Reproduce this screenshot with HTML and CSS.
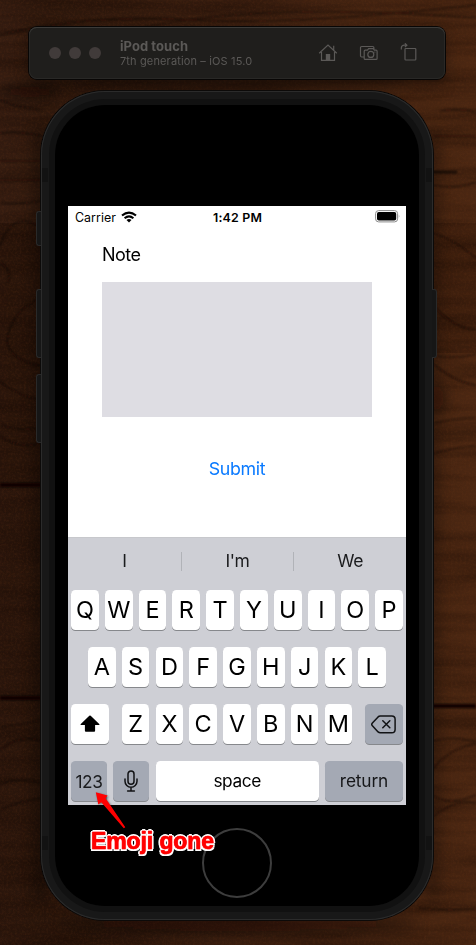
FILE: index.html
```html
<!DOCTYPE html>
<html lang="en">
<head>
<meta charset="utf-8">
<title>iPod touch Simulator</title>
<link rel="stylesheet" href="styles.css">
</head>
<body>
<svg class="wood" viewBox="0 0 476 945" aria-hidden="true">
  <defs>
    <linearGradient id="base" x1="0" x2="1" y1="0" y2="0">
      <stop offset="0" stop-color="#361d11"/><stop offset=".1" stop-color="#2f190d"/>
      <stop offset=".5" stop-color="#3b1f10"/><stop offset=".92" stop-color="#472511"/><stop offset="1" stop-color="#4b2712"/>
    </linearGradient>
    <filter id="grain" x="0" y="0" width="100%" height="100%" color-interpolation-filters="sRGB">
      <feTurbulence type="fractalNoise" baseFrequency=".007 .07" numOctaves="4" seed="8"/>
      <feColorMatrix values="0 0 0 0 .08  0 0 0 0 .03  0 0 0 0 .01  2.2 0 0 0 -.78"/>
    </filter>
    <filter id="speck" x="0" y="0" width="100%" height="100%" color-interpolation-filters="sRGB">
      <feTurbulence type="fractalNoise" baseFrequency=".45" numOctaves="2" seed="3"/>
      <feColorMatrix values="0 0 0 0 .45  0 0 0 0 .23  0 0 0 0 .1  .8 0 0 0 -.32"/>
    </filter>
    <filter id="soft" filterUnits="userSpaceOnUse" x="0" y="0" width="476" height="945"><feGaussianBlur stdDeviation=".8"/></filter>
    <filter id="haze" x="-50%" y="-50%" width="200%" height="200%"><feGaussianBlur stdDeviation="7"/></filter>
    <linearGradient id="fade"><stop offset="0" stop-color="#120600" stop-opacity=".3"/><stop offset="1" stop-color="#120600" stop-opacity="0"/></linearGradient>
  </defs>
  <rect width="476" height="945" fill="url(#base)"/>
  <rect y="223" width="240" height="262" fill="#120600" opacity=".32"/>
  <rect x="240" y="223" width="236" height="130" fill="#120600" opacity=".2"/>
  <rect y="485" width="300" height="460" fill="url(#fade)"/>
  <rect width="476" height="945" filter="url(#grain)" opacity=".35"/>
  <rect width="476" height="945" filter="url(#speck)" opacity=".5"/>
  <g filter="url(#haze)" fill="#0b0401" opacity=".55">
    <ellipse cx="30" cy="92" rx="30" ry="6"/><ellipse cx="438" cy="398" rx="6" ry="12"/>
    <ellipse cx="240" cy="84" rx="170" ry="4"/><ellipse cx="240" cy="924" rx="180" ry="7"/>
    <rect x="36" y="130" width="8" height="770"/><rect x="430" y="130" width="6" height="770"/>
  </g>
  <g filter="url(#soft)" fill="none" stroke="#100501" stroke-width="1.2" opacity=".65">
    <path d="M0 35Q90 14 190 20T476 5M145 27Q270 2 476 18M0 100Q20 108 42 110M0 133Q20 131 42 136M0 161H42M0 180H42M0 203Q20 205 42 201M440 111Q460 108 476 112M434 136H476M432 185Q455 190 476 182"/>
    <path d="M0 246Q13 208 42 228M0 262Q14 272 7 283M42 298Q10 310 7 343Q14 363 42 366M0 382Q20 397 42 400M0 425Q20 431 42 428M0 436Q20 450 42 443"/>
    <path d="M432 233Q452 238 476 258M432 304Q452 328 476 330M432 355Q455 360 476 354M432 363Q456 383 476 385M435 423Q456 418 476 418M432 454Q456 447 476 446"/>
    <path d="M0 727Q18 725 42 720M0 750Q22 733 42 741M0 783Q20 777 42 783M0 810Q20 801 42 798M432 741Q453 735 476 742M432 769Q452 747 476 744M432 795Q450 807 476 795M432 817Q456 799 476 803M418 908Q443 911 476 909"/>
  </g>
  <g filter="url(#soft)" fill="none" stroke="#080301" stroke-width="4">
    <path d="M0 485H42M0 698H42M432 706H476"/><path d="M432 172H457" stroke-width="2.5" opacity=".7"/>
  </g>
</svg>

<header class="toolbar">
  <div class="lights"><i></i><i></i><i></i></div>
  <div class="title"><strong>iPod touch</strong><span>7th generation – iOS 15.0</span></div>
  <div class="tools">
    <svg width="20" height="20" viewBox="0 0 20 20"><path d="M1.2 10.3 10 2l8.8 8.3M3.5 9v8.4h13V9M15.7 7V2.8"/><path class="solid" d="M7.8 11h4.4v6.5H7.8z"/></svg>
    <svg width="20" height="20" viewBox="0 0 20 20"><path d="M4.8 14H2.7Q1.5 14 1.5 12.8V4.7Q1.5 3.5 2.7 3.5h11q1.2 0 1.2 1.2v1.2M6.2 7.2h2.2l1.3-1.6h4.5l1.2 1.6h1.7q1 0 1 1v7.2q0 1-1 1H6.2q-1 0-1-1V8.2q0-1 1-1z"/><circle cx="11.8" cy="11.4" r="3"/><path d="M15.5 9.2h.8"/></svg>
    <svg width="20" height="20" viewBox="0 0 20 20"><rect x="5" y="5.5" width="10.8" height="11.5" rx=".8"/><path d="M1.3 6.5V5q0-2.8 3.2-2.8h2.2M4.9.3l2 1.9-2 1.9"/></svg>
  </div>
</header>

<main class="phone">
  <i class="side mute"></i><i class="side up"></i><i class="side down"></i><i class="side power"></i>
  <i class="band tl"></i><i class="band tr"></i><i class="band bl"></i><i class="band br"></i>
  <div class="face">
    <div class="screen">
      <div class="status">
        <div class="carrier">Carrier
          <svg width="16" height="12" viewBox="0 0 16 12"><g fill="none" stroke="#000" stroke-width="2.1"><path d="M1 4.5Q8-1.4 15 4.5M3.6 7.2Q8 3.5 12.4 7.2"/></g><path d="M5.5 8.9Q8 6.9 10.5 8.9L8 11.6z"/></svg>
        </div>
        <b>1:42 PM</b>
        <svg class="battery" width="25" height="13" viewBox="0 0 25 13"><rect x=".6" y=".6" width="22" height="11.3" rx="3" fill="none" stroke="#8b8b8b"/><rect x="2" y="2" width="19.2" height="8.5" rx="1.8"/><path d="M23.8 4.4Q25 6.2 23.8 8z" fill="#8b8b8b"/></svg>
      </div>
      <div class="form">
        <label for="note">Note</label>
        <textarea id="note"></textarea>
        <button>Submit</button>
      </div>
      <div class="keyboard">
        <div class="suggest"><span>I</span><span>I'm</span><span>We</span></div>
        <div class="row"><kbd>Q</kbd><kbd>W</kbd><kbd>E</kbd><kbd>R</kbd><kbd>T</kbd><kbd>Y</kbd><kbd>U</kbd><kbd>I</kbd><kbd>O</kbd><kbd>P</kbd></div>
        <div class="row"><kbd>A</kbd><kbd>S</kbd><kbd>D</kbd><kbd>F</kbd><kbd>G</kbd><kbd>H</kbd><kbd>J</kbd><kbd>K</kbd><kbd>L</kbd></div>
        <div class="row">
          <kbd class="shift"><svg width="20" height="18" viewBox="0 0 20 18"><path d="M9.3.8Q10 .2 10.7.8L19.2 9q.9.9-.4.9h-3.7v5.8q0 1-1 1H5.9q-1 0-1-1V9.9H1.2Q-.1 9.9.8 9z"/></svg></kbd>
          <kbd>Z</kbd><kbd>X</kbd><kbd>C</kbd><kbd>V</kbd><kbd>B</kbd><kbd>N</kbd><kbd>M</kbd>
          <kbd class="grey delete"><svg width="25" height="19" viewBox="0 0 25 19"><path class="line" d="M9.3 1h11.5q3.3 0 3.3 3.3v10.2q0 3.3-3.3 3.3H9.3q-1.3 0-2.2-.9L1.4 10.8q-1.3-1.4 0-2.8L7.1 1.9Q8 1 9.3 1zM11.8 5.8l7 7m0-7-7 7"/></svg></kbd>
        </div>
        <div class="row words">
          <kbd class="grey num">123</kbd>
          <kbd class="grey mic"><svg width="14" height="22" viewBox="0 0 14 22"><path class="line" d="M7 1a3 3 0 0 1 3 3v7.2a3 3 0 0 1-6 0V4a3 3 0 0 1 3-3zM1 9v2.2a6 6 0 0 0 12 0V9M7 17.3V21M3.6 21h6.8"/></svg></kbd>
          <kbd class="space">space</kbd>
          <kbd class="grey return">return</kbd>
        </div>
      </div>
    </div>
    <div class="home"></div>
  </div>
</main>

<div class="note-callout">
  <svg width="34" height="42" viewBox="0 0 34 42"><path d="M.8 1.2 12.6 4.6 10.6 7.2 30.3 36.3 28.8 37.3 6.3 11.2 3.3 13.4z"/></svg>
  <span>Emoji gone</span>
</div>
</body>
</html>
```
FILE: styles.css
```css
* { box-sizing: border-box; }
body {
  position: relative;
  margin: 0;
  width: 476px;
  height: 945px;
  padding-top: 27px;
  overflow: hidden;
  background: #2f190e;
  font-family: Inter, "Liberation Sans", sans-serif;
}
.wood { position: absolute; inset: 0; width: 476px; height: 945px; z-index: -1; }

.toolbar {
  display: flex;
  align-items: center;
  width: 416px;
  height: 52px;
  margin-left: 29px;
  padding: 0 25px 0 20px;
  border-radius: 8px;
  background: #1f1e1c;
  box-shadow: 0 0 0 1px #080605, inset 0 1px #3b3a38, inset 0 0 0 1px #292826, 0 6px 14px rgba(0,0,0,.35);
  color: #5b5957;
}
.lights { display: flex; gap: 8px; }
.lights i { width: 12px; height: 12px; border-radius: 50%; background: #413b3a; }
.title { display: flex; flex-direction: column; margin-left: 19px; }
.title strong { font-size: 13px; line-height: 15px; font-weight: 700; letter-spacing: .05px; }
.title span { font-size: 11px; line-height: 14px; letter-spacing: .14px; }
.tools { display: flex; gap: 21px; margin-left: auto; padding-bottom: 1px; }
.tools svg { fill: none; stroke: #5b5957; stroke-width: 1.2; }
.tools .solid { fill: #5b5957; stroke: none; }

.phone {
  position: relative;
  width: 392px;
  height: 829px;
  margin: 12px 0 0 41px;
  padding: 14px;
  border-radius: 64px;
  background: #181818;
  box-shadow: 0 0 0 1px #0c0a09, inset 0 0 0 1px #2b2b2b, inset 0 0 0 8px #181818, inset 0 0 0 14px #111;
}
.side { position: absolute; left: -5px; width: 5px; border: 1px solid #292929; border-right: 0; border-radius: 3px 0 0 3px; background: #161616; }
.mute { top: 120px; height: 35px; }
.up { top: 198px; height: 69px; }
.down { top: 283px; height: 69px; }
.power { top: 198px; left: auto; right: -4px; height: 69px; border-right: 1px solid #292929; border-left: 0; border-radius: 0 3px 3px 0; }
.band { position: absolute; width: 6px; height: 14px; background: #121212; }
.tl { top: 77px; left: 1px; } .tr { top: 77px; right: 1px; }
.bl { bottom: 70px; left: 1px; } .br { bottom: 70px; right: 1px; }
.face { display: flex; flex-direction: column; align-items: center; height: 801px; padding-top: 101px; border-radius: 50px; background: #000; }
.screen { display: flex; flex-direction: column; width: 338px; height: 599px; background: #fff; }
.home { width: 70px; height: 70px; margin-top: 23px; border: 2px solid #3d3d3d; border-radius: 50%; }

.status { display: grid; grid-template-columns: 1fr auto 1fr; align-items: center; height: 22px; padding: 0 6px 0 7px; font-size: 12.4px; }
.carrier { display: flex; align-items: center; gap: 5px; letter-spacing: .05px; }
.status b { font-weight: 600; letter-spacing: .2px; }
.battery { justify-self: end; margin-top: -2px; }

.form { display: flex; flex-direction: column; height: 309px; padding: 15px 34px 0; }
label { font-size: 18px; line-height: 24px; letter-spacing: -.5px; }
textarea { width: 270px; height: 135px; margin: 15px 0 0; padding: 0; border: 0; background: #dedde3; resize: none; }
button { margin: 40px auto 0; padding: 0; border: 0; background: none; color: #0a7aff; font: 17.8px/24px Inter, sans-serif; letter-spacing: -.35px; }

.keyboard { height: 268px; background: #cecfd5; box-shadow: inset 0 1px #c7c8cc; }
.suggest { display: grid; grid-template-columns: repeat(3, 1fr); align-items: center; height: 53px; padding-bottom: 5px; font-size: 17.5px; letter-spacing: -.4px; text-align: center; color: #1b1c1e; }
.suggest span { height: 19px; line-height: 17px; }
.suggest span + span { border-left: 1px solid #b1b3b8; }
.row { display: flex; justify-content: center; gap: 6.12px; height: 40px; margin-bottom: 17px; padding: 0 3px; }
kbd {
  display: flex;
  align-items: center;
  justify-content: center;
  width: 27.7px;
  flex: none;
  border-radius: 4.5px;
  background: #fff;
  box-shadow: 0 1px #86888c;
  font: 400 23.5px/1 Inter, sans-serif;
  color: #000;
}
.grey { background: #a4a9b4; }
.shift { width: 38px; margin-right: 6.6px; }
.delete { width: 38px; margin-left: 6.6px; }
.words kbd { font-size: 17.3px; letter-spacing: -.4px; }
.words { justify-content: space-between; gap: 0; }
.words .num { width: 36px; padding-top: 1px; color: #1b1c1e; }
.mic { width: 36px; }
.words .space { width: 163px; }
.words .return { width: 78px; color: #161719; letter-spacing: -.15px; }
.line { fill: none; stroke: #111214; stroke-width: 1.5; stroke-linecap: round; stroke-linejoin: round; }

.note-callout { position: absolute; left: 91px; top: 791px; }
.note-callout svg { display: block; margin-left: 4px; fill: #f00; filter: drop-shadow(1px 1px 1px rgba(0,0,0,.5)); }
.note-callout span {
  display: block;
  position: relative;
  margin-top: -5px;
  font: bold 23px/26px "Liberation Sans", sans-serif;
  letter-spacing: -.1px;
  color: #f00;
  white-space: nowrap;
  text-shadow: 0 0 1px #f00, 2px 0 #fff, -2px 0 #fff, 0 2px #fff, 0 -2px #fff, 1.5px 1.5px #fff, -1.5px 1.5px #fff, 1.5px -1.5px #fff, -1.5px -1.5px #fff;
  -webkit-text-stroke: .6px #f00;
}
```
